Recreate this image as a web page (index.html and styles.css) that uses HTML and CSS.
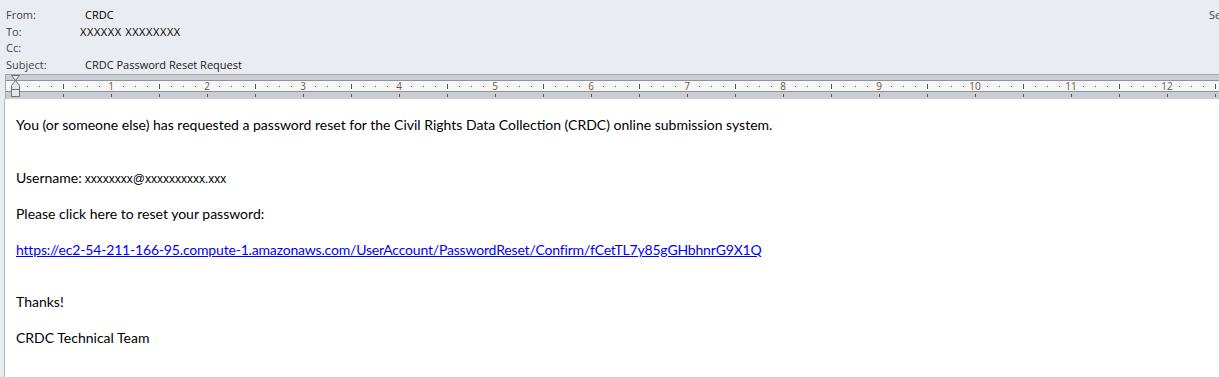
FILE: index.html
```html
<!DOCTYPE html>
<html>
<head>
<meta charset="utf-8">
<link rel="stylesheet" href="styles.css">
</head>
<body>
<div class="header">
  <div class="hrow"><span class="label">From:</span><span class="value v-from">CRDC</span><span class="sent">Se</span></div>
  <div class="hrow"><span class="label">To:</span><span class="value v-to">XXXXXX XXXXXXXX</span></div>
  <div class="hrow"><span class="label">Cc:</span></div>
  <div class="hrow"><span class="label">Subject:</span><span class="value v-subj">CRDC Password Reset Request</span></div>
</div>
<div class="ruler">
  <svg width="1219" height="25" viewBox="0 0 1219 25" xmlns="http://www.w3.org/2000/svg">
    <rect x="0" y="0" width="1219" height="25" fill="#e8ebef"/>
    <rect x="5" y="0" width="1214" height="25" fill="#caced3"/>
    <line x1="5" y1="0.5" x2="1219" y2="0.5" stroke="#a3a7ac"/>
    <rect x="5" y="6" width="1214" height="12" fill="#f6f6f6"/>
    <line x1="5" y1="6.5" x2="1219" y2="6.5" stroke="#8f9398"/>
    <line x1="5" y1="17.5" x2="1219" y2="17.5" stroke="#8f9398"/>
    <line x1="5.5" y1="0" x2="5.5" y2="25" stroke="#a3a7ac"/>
    <g fill="#555">
      <rect x="27" y="12" width="1" height="1"/><rect x="39" y="12" width="1" height="1"/><rect x="51" y="12" width="1" height="1"/>
      <rect x="75" y="12" width="1" height="1"/><rect x="87" y="12" width="1" height="1"/><rect x="99" y="12" width="1" height="1"/>
      <rect x="123" y="12" width="1" height="1"/><rect x="135" y="12" width="1" height="1"/><rect x="147" y="12" width="1" height="1"/>
      <rect x="171" y="12" width="1" height="1"/><rect x="183" y="12" width="1" height="1"/><rect x="195" y="12" width="1" height="1"/>
      <rect x="219" y="12" width="1" height="1"/><rect x="231" y="12" width="1" height="1"/><rect x="243" y="12" width="1" height="1"/>
      <rect x="267" y="12" width="1" height="1"/><rect x="279" y="12" width="1" height="1"/><rect x="291" y="12" width="1" height="1"/>
      <rect x="315" y="12" width="1" height="1"/><rect x="327" y="12" width="1" height="1"/><rect x="339" y="12" width="1" height="1"/>
      <rect x="363" y="12" width="1" height="1"/><rect x="375" y="12" width="1" height="1"/><rect x="387" y="12" width="1" height="1"/>
      <rect x="411" y="12" width="1" height="1"/><rect x="423" y="12" width="1" height="1"/><rect x="435" y="12" width="1" height="1"/>
      <rect x="459" y="12" width="1" height="1"/><rect x="471" y="12" width="1" height="1"/><rect x="483" y="12" width="1" height="1"/>
      <rect x="507" y="12" width="1" height="1"/><rect x="519" y="12" width="1" height="1"/><rect x="531" y="12" width="1" height="1"/>
      <rect x="555" y="12" width="1" height="1"/><rect x="567" y="12" width="1" height="1"/><rect x="579" y="12" width="1" height="1"/>
      <rect x="603" y="12" width="1" height="1"/><rect x="615" y="12" width="1" height="1"/><rect x="627" y="12" width="1" height="1"/>
      <rect x="651" y="12" width="1" height="1"/><rect x="663" y="12" width="1" height="1"/><rect x="675" y="12" width="1" height="1"/>
      <rect x="699" y="12" width="1" height="1"/><rect x="711" y="12" width="1" height="1"/><rect x="723" y="12" width="1" height="1"/>
      <rect x="747" y="12" width="1" height="1"/><rect x="759" y="12" width="1" height="1"/><rect x="771" y="12" width="1" height="1"/>
      <rect x="795" y="12" width="1" height="1"/><rect x="807" y="12" width="1" height="1"/><rect x="819" y="12" width="1" height="1"/>
      <rect x="843" y="12" width="1" height="1"/><rect x="855" y="12" width="1" height="1"/><rect x="867" y="12" width="1" height="1"/>
      <rect x="891" y="12" width="1" height="1"/><rect x="903" y="12" width="1" height="1"/><rect x="915" y="12" width="1" height="1"/>
      <rect x="939" y="12" width="1" height="1"/><rect x="951" y="12" width="1" height="1"/><rect x="963" y="12" width="1" height="1"/>
      <rect x="987" y="12" width="1" height="1"/><rect x="999" y="12" width="1" height="1"/><rect x="1011" y="12" width="1" height="1"/>
      <rect x="1035" y="12" width="1" height="1"/><rect x="1047" y="12" width="1" height="1"/><rect x="1059" y="12" width="1" height="1"/>
      <rect x="1083" y="12" width="1" height="1"/><rect x="1095" y="12" width="1" height="1"/><rect x="1107" y="12" width="1" height="1"/>
      <rect x="1131" y="12" width="1" height="1"/><rect x="1143" y="12" width="1" height="1"/><rect x="1155" y="12" width="1" height="1"/>
      <rect x="1179" y="12" width="1" height="1"/><rect x="1191" y="12" width="1" height="1"/><rect x="1203" y="12" width="1" height="1"/>
    </g>
    <g fill="#555">
      <rect x="63" y="10" width="1" height="5"/><rect x="159" y="10" width="1" height="5"/><rect x="255" y="10" width="1" height="5"/>
      <rect x="351" y="10" width="1" height="5"/><rect x="447" y="10" width="1" height="5"/><rect x="543" y="10" width="1" height="5"/>
      <rect x="639" y="10" width="1" height="5"/><rect x="735" y="10" width="1" height="5"/><rect x="831" y="10" width="1" height="5"/>
      <rect x="927" y="10" width="1" height="5"/><rect x="1023" y="10" width="1" height="5"/><rect x="1119" y="10" width="1" height="5"/>
      <rect x="1215" y="10" width="1" height="5"/>
    </g>
    <g fill="#555">
      <rect x="63" y="20" width="1" height="3"/><rect x="111" y="20" width="1" height="3"/><rect x="159" y="20" width="1" height="3"/>
      <rect x="207" y="20" width="1" height="3"/><rect x="255" y="20" width="1" height="3"/><rect x="303" y="20" width="1" height="3"/>
      <rect x="351" y="20" width="1" height="3"/><rect x="399" y="20" width="1" height="3"/><rect x="447" y="20" width="1" height="3"/>
      <rect x="495" y="20" width="1" height="3"/><rect x="543" y="20" width="1" height="3"/><rect x="591" y="20" width="1" height="3"/>
      <rect x="639" y="20" width="1" height="3"/><rect x="687" y="20" width="1" height="3"/><rect x="735" y="20" width="1" height="3"/>
      <rect x="783" y="20" width="1" height="3"/><rect x="831" y="20" width="1" height="3"/><rect x="879" y="20" width="1" height="3"/>
      <rect x="927" y="20" width="1" height="3"/><rect x="975" y="20" width="1" height="3"/><rect x="1023" y="20" width="1" height="3"/>
      <rect x="1071" y="20" width="1" height="3"/><rect x="1119" y="20" width="1" height="3"/><rect x="1167" y="20" width="1" height="3"/>
      <rect x="1215" y="20" width="1" height="3"/>
    </g>
    <g class="rnum" text-anchor="middle">
      <rect x="105" y="7" width="12" height="10" fill="#f6f6f6"/><text x="111" y="16">1</text>
      <rect x="201" y="7" width="12" height="10" fill="#f6f6f6"/><text x="207" y="16">2</text>
      <rect x="297" y="7" width="12" height="10" fill="#f6f6f6"/><text x="303" y="16">3</text>
      <rect x="393" y="7" width="12" height="10" fill="#f6f6f6"/><text x="399" y="16">4</text>
      <rect x="489" y="7" width="12" height="10" fill="#f6f6f6"/><text x="495" y="16">5</text>
      <rect x="585" y="7" width="12" height="10" fill="#f6f6f6"/><text x="591" y="16">6</text>
      <rect x="681" y="7" width="12" height="10" fill="#f6f6f6"/><text x="687" y="16">7</text>
      <rect x="777" y="7" width="12" height="10" fill="#f6f6f6"/><text x="783" y="16">8</text>
      <rect x="873" y="7" width="12" height="10" fill="#f6f6f6"/><text x="879" y="16">9</text>
      <rect x="966" y="7" width="18" height="10" fill="#f6f6f6"/><text x="975" y="16">10</text>
      <rect x="1062" y="7" width="18" height="10" fill="#f6f6f6"/><text x="1071" y="16">11</text>
      <rect x="1158" y="7" width="18" height="10" fill="#f6f6f6"/><text x="1167" y="16">12</text>
    </g>
    <g stroke="#6e7277" stroke-width="1" fill="#e4e6e9">
      <path d="M11.5 1.5 H19.5 L15.5 6.5 Z"/>
      <path d="M15.5 6.5 L19.5 11.5 V15.5 H11.5 V11.5 Z"/>
      <rect x="11.5" y="15.5" width="8" height="7"/>
    </g>
  </svg>
</div>
<div class="page">
  <div class="gutter"></div>
  <div class="body">
    <p class="para gap-after">You (or someone else) has requested a password reset for the Civil Rights Data Collection (CRDC) online submission system.</p>
    <p class="para">Username:<span class="email">xxxxxxxx@xxxxxxxxxx.xxx</span></p>
    <p class="para">Please click here to reset your password:</p>
    <p class="para gap-after"><a class="link" href="#">https://ec2-54-211-166-95.compute-1.amazonaws.com/UserAccount/PasswordReset/Confirm/fCetTL7y85gGHbhnrG9X1Q</a></p>
    <p class="para">Thanks!</p>
    <p class="para">CRDC Technical Team</p>
  </div>
</div>
</body>
</html>
```

FILE: styles.css
```css
html, body {
  margin: 0;
  padding: 0;
  background: #ffffff;
}
body {
  width: 1219px;
  height: 377px;
  overflow: hidden;
  display: flex;
  flex-direction: column;
}
.header {
  height: 74px;
  background: #e9ecf0;
  padding-top: 6px;
  box-sizing: border-box;
  font-family: "Open Sans", "DejaVu Sans", sans-serif;
  font-size: 11px;
  color: #444444;
  flex: none;
}
.hrow {
  height: 16.7px;
  display: flex;
  align-items: center;
  position: relative;
}
.label {
  width: 80px;
  padding-left: 6px;
  box-sizing: border-box;
  flex: none;
}
.value {
  color: #000000;
}
.v-from { margin-left: 5px; }
.v-to { letter-spacing: 0.6px; }
.v-subj { margin-left: 5px; color: #222; }
.sent {
  position: absolute;
  left: 1209px;
  top: 0;
  height: 100%;
  display: flex;
  align-items: center;
}
.ruler {
  height: 25px;
  flex: none;
}
.ruler svg { display: block; }
.rnum text {
  font-family: "Open Sans", "DejaVu Sans", sans-serif;
  font-size: 10px;
  fill: #6b5a4a;
}
.page {
  flex: 1;
  display: flex;
}
.gutter {
  width: 4px;
  background: #e8ebef;
  border-right: 1px solid #b4b8bd;
  flex: none;
}
.body {
  padding-left: 11px;
  padding-top: 17px;
  font-family: "Lato", "Liberation Sans", sans-serif;
  font-size: 14px;
  color: #000000;
}
.para {
  margin: 0 0 17.5px 0;
  line-height: 18px;
  white-space: nowrap;
}
.first { letter-spacing: -0.04px; }
.gap-after { margin-bottom: 34.5px; }
.email {
  font-family: "Liberation Sans", sans-serif;
  font-size: 12px;
  margin-left: 3px;
}
.link {
  color: #0000ff;
  text-decoration: underline;
  letter-spacing: -0.18px;
}
```
